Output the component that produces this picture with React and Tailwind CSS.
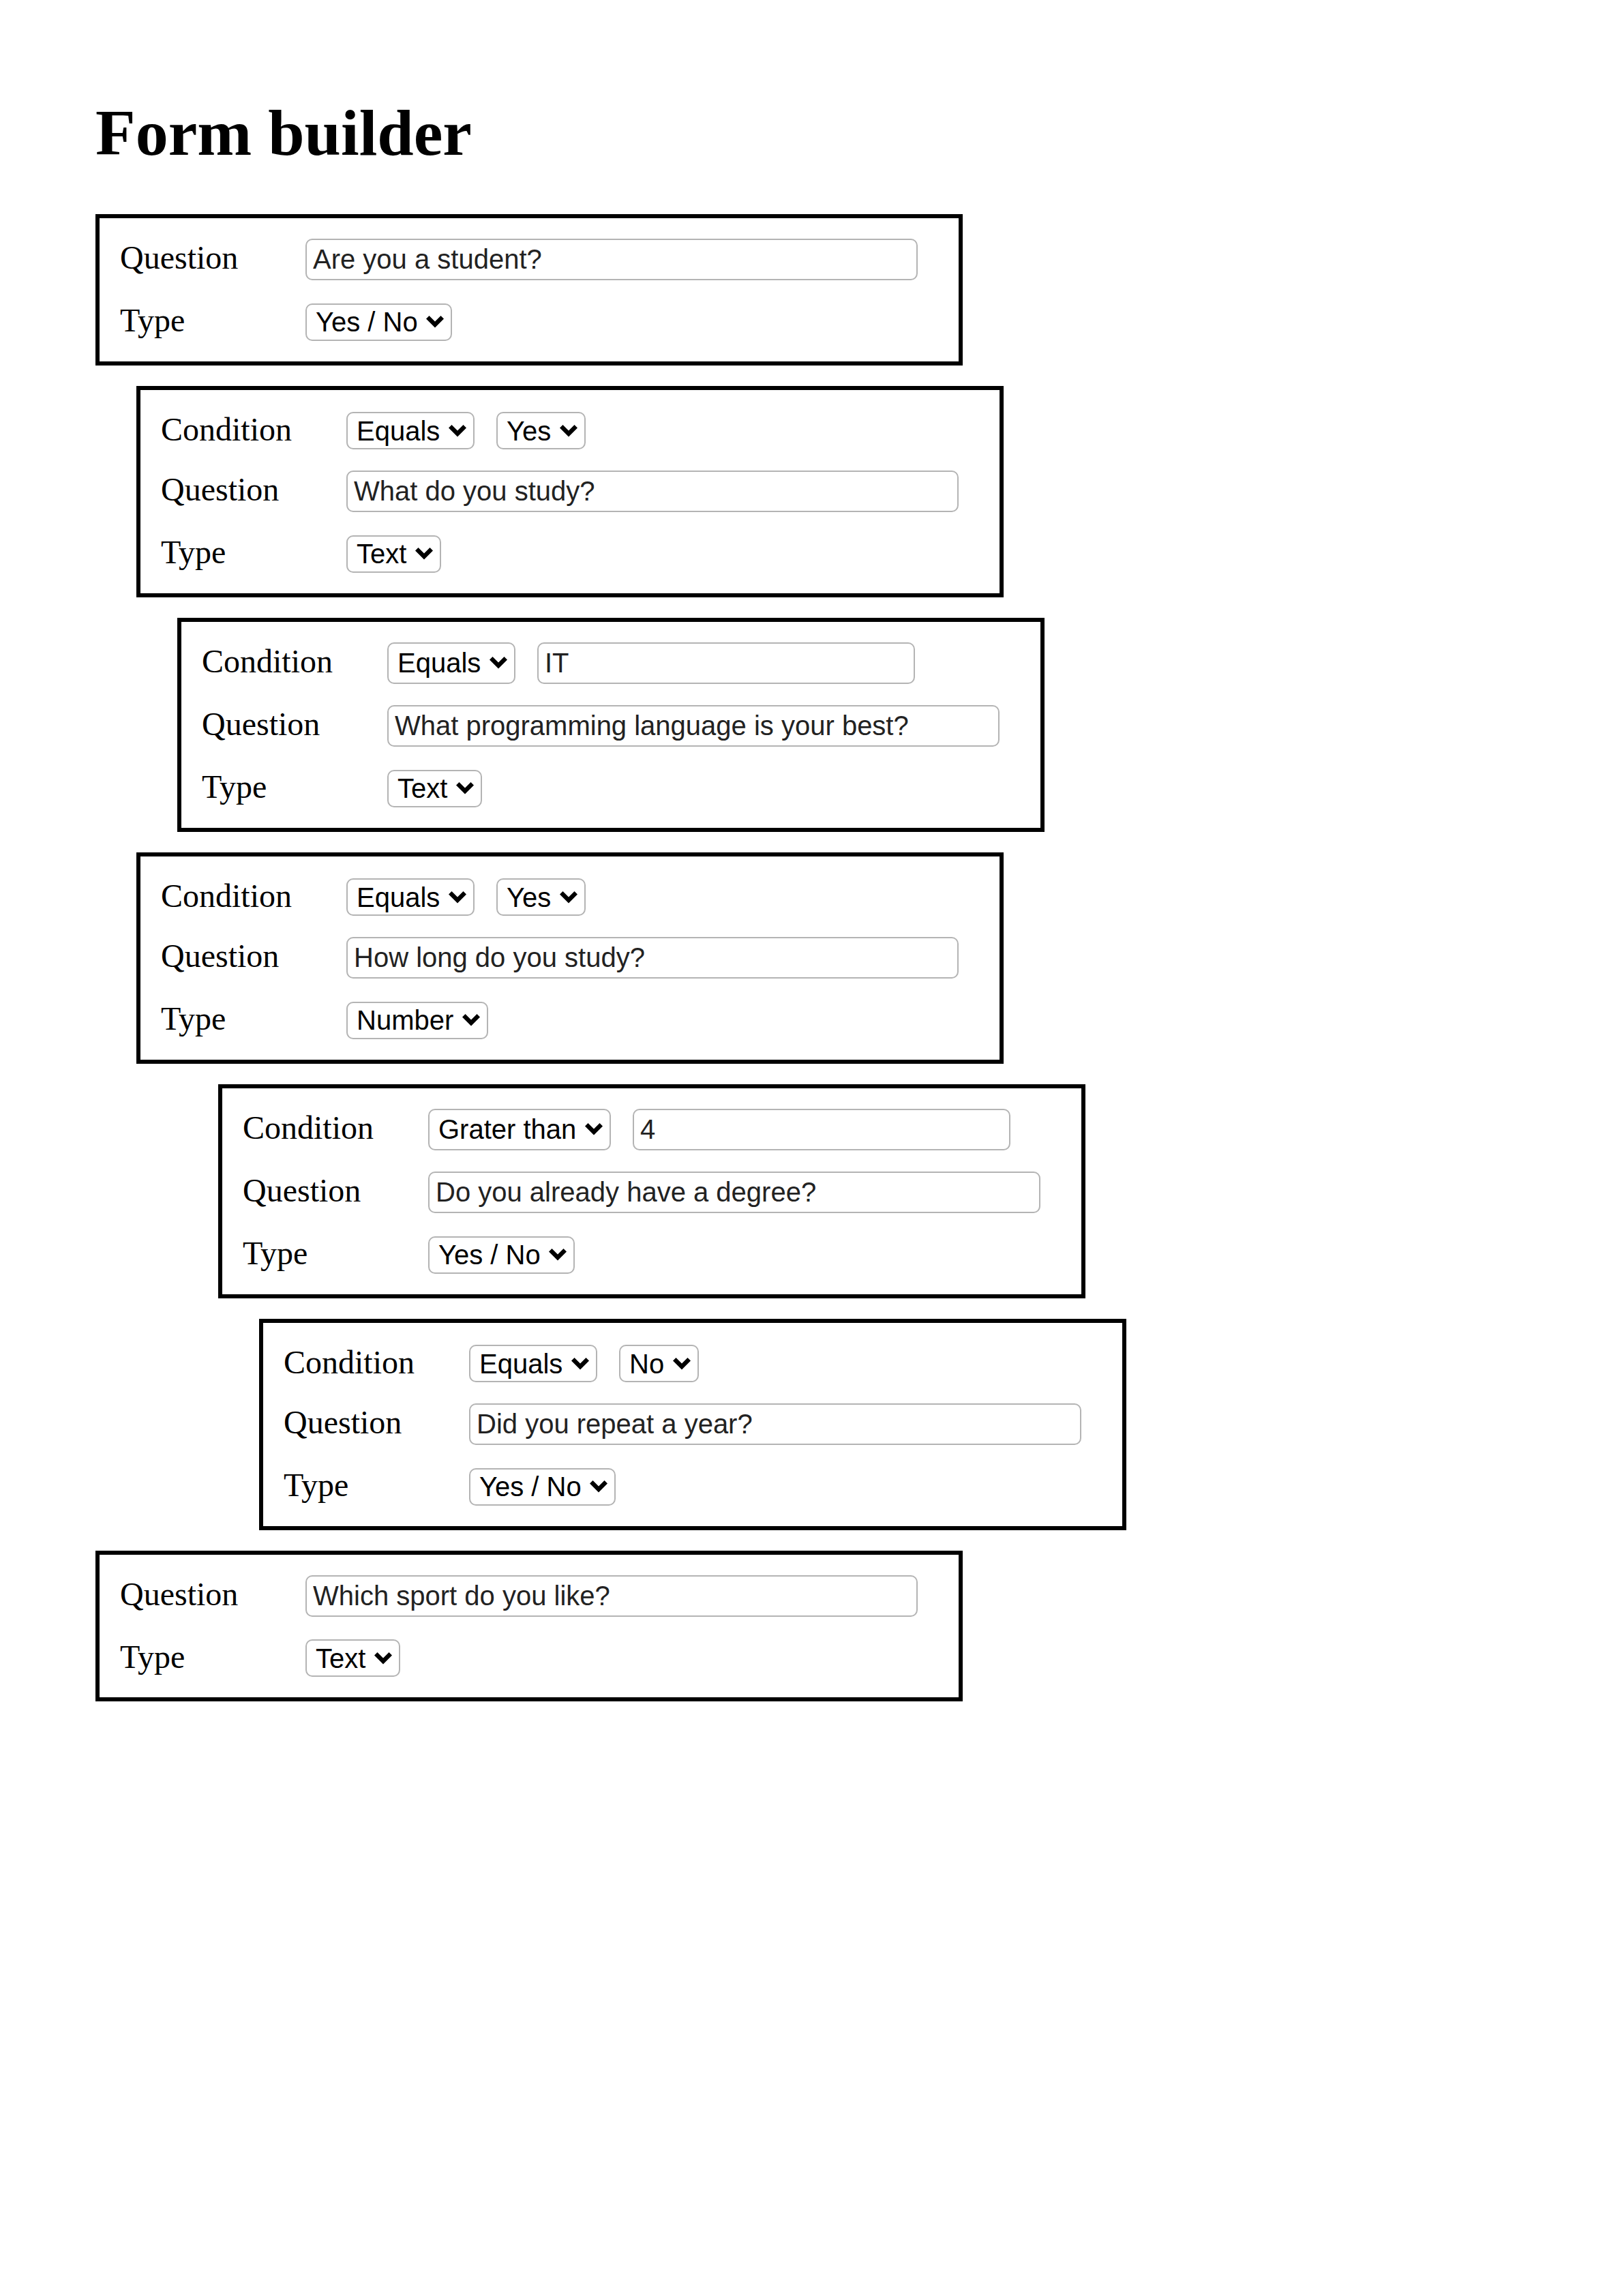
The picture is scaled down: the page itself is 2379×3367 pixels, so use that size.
import React from "react";

const boxes = [
  { level: 0, question: "Are you a student?", type: "Yes / No" },
  { level: 1, cond: "Equals", value: { kind: "select", v: "Yes" }, question: "What do you study?", type: "Text" },
  { level: 2, cond: "Equals", value: { kind: "input", v: "IT" }, question: "What programming language is your best?", type: "Text" },
  { level: 1, cond: "Equals", value: { kind: "select", v: "Yes" }, question: "How long do you study?", type: "Number" },
  { level: 3, cond: "Grater than", value: { kind: "input", v: "4" }, question: "Do you already have a degree?", type: "Yes / No" },
  { level: 4, cond: "Equals", value: { kind: "select", v: "No" }, question: "Did you repeat a year?", type: "Yes / No" },
  { level: 0, question: "Which sport do you like?", type: "Text" },
];

const indent = ["ml-0", "ml-[60px]", "ml-[120px]", "ml-[180px]", "ml-[240px]"];

function Chevron() {
  return (
    <svg
      className="pointer-events-none absolute right-[12px] top-1/2 -translate-y-1/2"
      width="26"
      height="18"
      viewBox="0 0 26 18"
    >
      <polygon points="0,4.5 4.5,0 13,8.5 21.5,0 26,4.5 13,17.5" fill="#000" />
    </svg>
  );
}

function Select({ value, tall }) {
  return (
    <div className="relative inline-flex shrink-0">
      <select
        value={value}
        onChange={() => {}}
        className={`${tall ? "h-[61px]" : "h-[55px]"} appearance-none rounded-[10px] border-2 border-[#b4b4b4] bg-white pl-[13px] pr-[48px] text-[40px] leading-[normal] text-black font-['Liberation_Sans',Arial,sans-serif]`}
      >
        <option>{value}</option>
      </select>
      <Chevron />
    </div>
  );
}

function TextInput({ value, width }) {
  return (
    <input
      type="text"
      value={value}
      readOnly
      className={`${width} h-[61px] shrink-0 rounded-[10px] border-2 border-[#b4b4b4] bg-white px-[9px] text-[40px] leading-[normal] text-[#222] font-['Liberation_Sans',Arial,sans-serif] outline-none`}
    />
  );
}

function Row({ label, children }) {
  return (
    <div className="flex items-baseline">
      <div className="w-[272px] shrink-0 text-[48px] leading-[normal] text-black font-['Liberation_Serif','Times_New_Roman',serif]">
        {label}
      </div>
      <div className="flex items-baseline gap-[32px]">{children}</div>
    </div>
  );
}

function Box({ b }) {
  const inputValue = b.value && b.value.kind === "input";
  return (
    <div
      className={`${indent[b.level]} flex w-[1272px] flex-col gap-[31px] border-[6px] border-black px-[30px] py-[30px]`}
    >
      {b.cond && (
        <Row label="Condition">
          <Select value={b.cond} tall={inputValue} />
          {inputValue ? (
            <TextInput value={b.value.v} width="w-[554px]" />
          ) : (
            <Select value={b.value.v} />
          )}
        </Row>
      )}
      <Row label="Question">
        <TextInput value={b.question} width="w-[898px]" />
      </Row>
      <Row label="Type">
        <Select value={b.type} />
      </Row>
    </div>
  );
}

export default function App() {
  return (
    <div className="min-h-[3367px] w-[2379px] bg-white pl-[140px] pt-[139px] leading-[normal] font-['Liberation_Serif','Times_New_Roman',serif]">
      <h1 className="mb-[64px] text-[96px] leading-[normal] font-bold text-black font-['Liberation_Serif','Times_New_Roman',serif]">
        Form builder
      </h1>
      <div className="flex flex-col gap-[30px]">
        {boxes.map((b, i) => (
          <Box key={i} b={b} />
        ))}
      </div>
    </div>
  );
}
